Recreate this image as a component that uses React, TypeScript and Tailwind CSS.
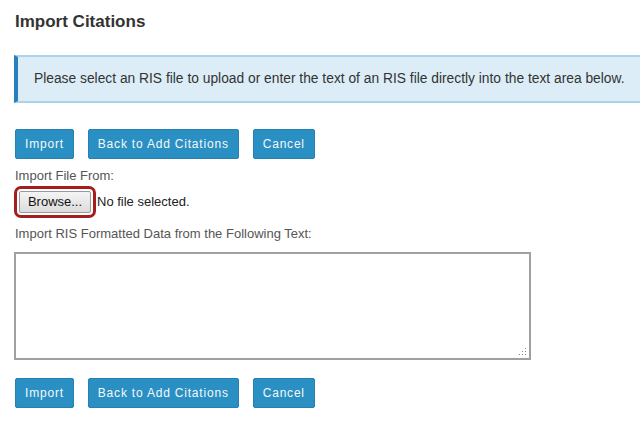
function ActionButtons() {
  const cls =
    "h-[30px] px-[9px] rounded-[2px] bg-[#2a8fc2] border border-[#2681b0] text-[#f4f9fc] text-[12px] tracking-[0.8px] font-medium";
  return (
    <div className="flex gap-[14px]">
      <button className={cls}>Import</button>
      <button className={cls}>Back to Add Citations</button>
      <button className={cls}>Cancel</button>
    </div>
  );
}

export default function App() {
  return (
    <div
      className="w-[640px] h-[432px] overflow-hidden bg-white pl-[14px] text-[#333]"
      style={{ fontFamily: '"Liberation Sans", Arial, sans-serif' }}
    >
      <h2 className="pt-[12px] text-[17px] font-bold leading-[20px] text-[#333] pl-[1px]">Import Citations</h2>

      <div className="mt-[23px] h-[48px] w-[640px] flex items-center bg-[#dcedf7] border-y-2 border-[#a9d4ec] border-l-4 border-l-[#2581bd] pl-[16px] text-[13.8px] text-[#333]">
        Please select an RIS file to upload or enter the text of an RIS file directly into the text area below.
      </div>

      <div className="mt-[26px] pl-[1px]">
        <ActionButtons />
      </div>

      <div className="mt-[9px] pl-[1px] text-[13px] leading-[15px] text-[#555]">Import File From:</div>

      <div className="mt-[3px] flex items-center">
        <div className="flex rounded-[7px] border-[3px] border-[#a51d1d] p-[2px]">
          <button className="h-[22px] w-[72px] rounded-[2px] border border-[#9a9a9a] bg-gradient-to-b from-[#f4f4f4] to-[#dcdcdc] text-[13px] leading-[20px] text-[#111]">
            Browse...
          </button>
        </div>
        <span className="ml-[1px] text-[13px] text-[#222]">No file selected.</span>
      </div>

      <div className="mt-[8px] pl-[1px] text-[13px] leading-[15px] text-[#555]">
        Import RIS Formatted Data from the Following Text:
      </div>

      <div className="mt-[11px] relative h-[108px] w-[517px] border-2 border-[#a0a0a0] bg-white">
        <svg className="absolute right-[2px] bottom-[2px]" width="8" height="8" viewBox="0 0 8 8">
          <g fill="#888">
            <rect x="6" y="0" width="1" height="1" />
            <rect x="3" y="3" width="1" height="1" />
            <rect x="6" y="3" width="1" height="1" />
            <rect x="0" y="6" width="1" height="1" />
            <rect x="3" y="6" width="1" height="1" />
            <rect x="6" y="6" width="1" height="1" />
          </g>
        </svg>
      </div>

      <div className="mt-[18px] pl-[1px]">
        <ActionButtons />
      </div>
    </div>
  );
}
